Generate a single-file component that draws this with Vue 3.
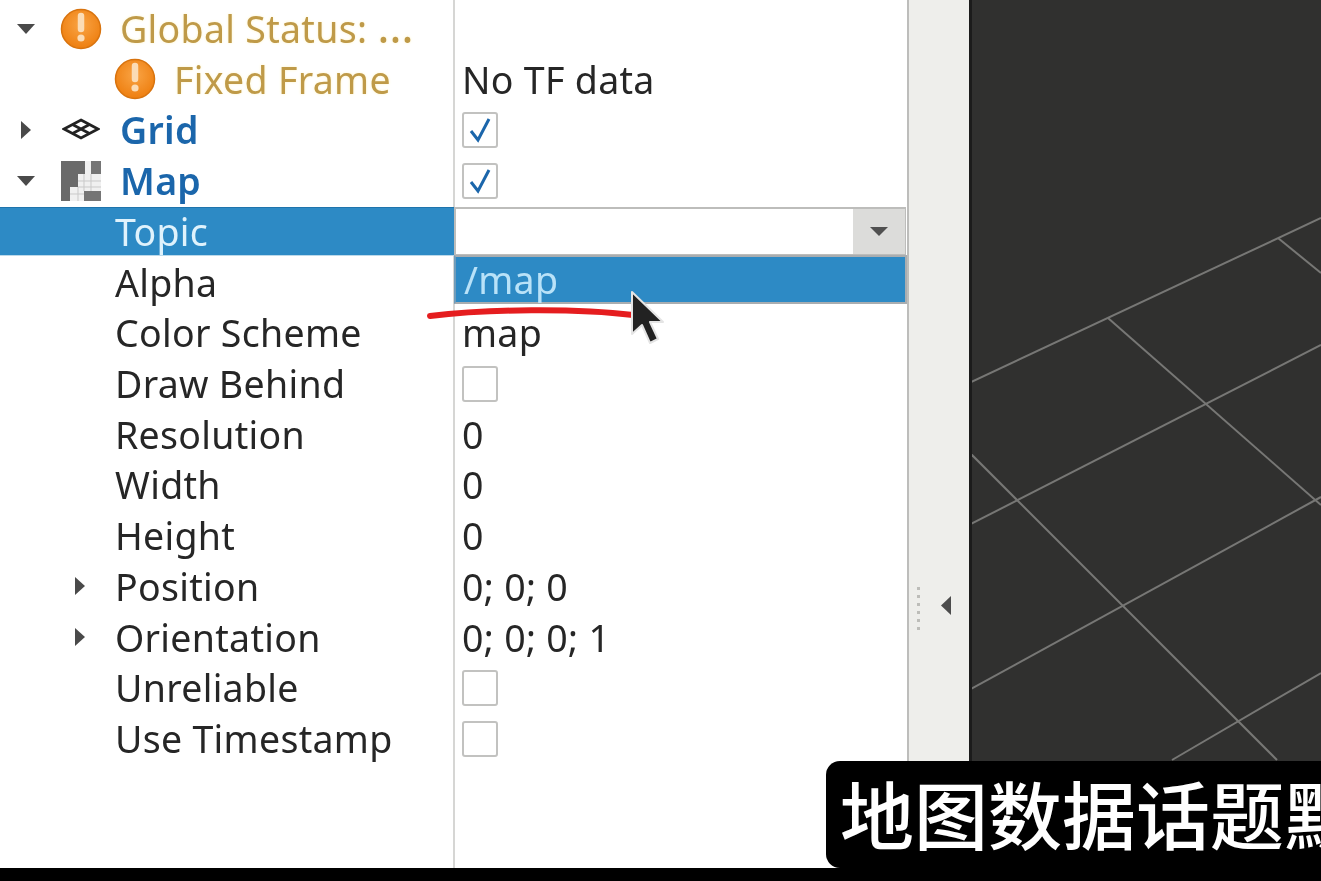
<script setup>
const rows = [
  { label: 'Global Status: ', elide: true, depth: 'd0', twist: 'down', icon: 'warn', tone: 'warning' },
  { label: 'Fixed Frame', depth: 'd2', icon: 'warn', tone: 'warning', value: 'No TF data' },
  { label: 'Grid', depth: 'd0', twist: 'right', icon: 'grid', tone: 'display', check: true },
  { label: 'Map', depth: 'd0', twist: 'down', icon: 'map', tone: 'display', check: true },
  { label: 'Topic', depth: 'd1', selected: true, combo: true },
  { label: 'Alpha', depth: 'd1' },
  { label: 'Color Scheme', depth: 'd1', value: 'map' },
  { label: 'Draw Behind', depth: 'd1', check: false },
  { label: 'Resolution', depth: 'd1', value: '0' },
  { label: 'Width', depth: 'd1', value: '0' },
  { label: 'Height', depth: 'd1', value: '0' },
  { label: 'Position', depth: 'd1', twist: 'right', value: '0; 0; 0' },
  { label: 'Orientation', depth: 'd1', twist: 'right', value: '0; 0; 0; 1' },
  { label: 'Unreliable', depth: 'd1', check: false },
  { label: 'Use Timestamp', depth: 'd1', check: false }
]
const gridLines = [
  [0, 383, 352, 218],
  [0, 525, 352, 345],
  [0, 690, 352, 497],
  [203, 760, 352, 673],
  [139, 318, 352, 505],
  [309, 238, 352, 273],
  [0, 452, 308, 760]
]
</script>

<template>
  <div class="screen">
    <main class="workspace">
      <section class="props">
        <div class="tree">
          <div v-for="row in rows" :key="row.label" class="row" :class="{ selected: row.selected }">
            <div class="name" :class="[row.depth, row.tone]">
              <span v-if="row.depth !== 'd2'" class="twist">
                <svg v-if="row.twist === 'down'" width="20" height="12" viewBox="0 0 20 12"><path d="M1 1h18L10 11z" fill="#4a4a4a" /></svg>
                <svg v-else-if="row.twist === 'right'" width="12" height="20" viewBox="0 0 12 20"><path d="M1 1v18l10-9z" fill="#4a4a4a" /></svg>
              </span>
              <span v-if="row.icon" class="icon">
                <svg v-if="row.icon === 'warn'" width="42" height="42" viewBox="0 0 42 42">
                  <circle cx="21" cy="21" r="19.5" fill="url(#orange)" stroke="#d8730e" stroke-width="1.5" />
                  <path d="M21 8v13" stroke="#fbdcb6" stroke-width="6.5" stroke-linecap="round" />
                  <circle cx="21" cy="30" r="3.6" fill="#fbdcb6" />
                </svg>
                <svg v-else-if="row.icon === 'grid'" class="grid-icon" width="38" height="22" viewBox="0 0 38 22" fill="none" stroke="#222" stroke-width="2.8">
                  <path d="M19 2 36 11 19 20 2 11z" />
                  <path d="M10.5 6.5 27.5 15.5M27.5 6.5 10.5 15.5" />
                </svg>
                <svg v-else width="42" height="42" viewBox="0 0 42 42">
                  <rect x="1" y="1" width="40" height="40" fill="#f0f0f0" />
                  <path d="M1 1h24v13h-7v13h-8v14H1z" fill="#6a6a6a" />
                  <rect x="31" y="1" width="10" height="13" fill="#757575" />
                  <rect x="24" y="31" width="17" height="10" fill="#757575" />
                  <path d="M18 21h23M18 27h23M10 34h14M24 14v17M31 14v17M18 27v14" stroke="#c9c9c9" stroke-width="1" />
                </svg>
              </span>
              <span class="text">{{ row.label }}<span v-if="row.elide" class="elide">…</span></span>
            </div>
            <div class="value">
              <span v-if="row.value">{{ row.value }}</span>
              <span v-else-if="row.check !== undefined" class="check">
                <svg v-if="row.check" width="26" height="28" viewBox="0 0 26 28"><path d="M4 15l7 9L22 3" fill="none" stroke="#1b66ab" stroke-width="3" /></svg>
              </span>
              <div v-else-if="row.combo" class="combo">
                <span class="combo-field"></span>
                <span class="combo-btn">
                  <svg width="20" height="11" viewBox="0 0 20 11"><path d="M1 1h18l-9 9z" fill="#505050" /></svg>
                </span>
                <div class="option">/map</div>
              </div>
            </div>
          </div>
        </div>
      </section>

      <aside class="splitter">
        <span class="dots"><i v-for="n in 6" :key="n"></i></span>
        <svg class="collapse" width="12" height="21" viewBox="0 0 12 21"><path d="M11 1v19L1 10.5z" fill="#4c4c4c" /></svg>
      </aside>

      <section class="viewport">
        <svg class="floor" width="352" height="868" viewBox="0 0 352 868">
          <line v-for="(l, i) in gridLines" :key="i" :x1="l[0]" :y1="l[1]" :x2="l[2]" :y2="l[3]" stroke="#777775" stroke-width="2" />
        </svg>
      </section>

      <svg class="mark" width="230" height="70" viewBox="0 0 230 70">
        <path d="M4 26C60 19 150 18 207 25" fill="none" stroke="#e51d1f" stroke-width="6" stroke-linecap="round" />
      </svg>
      <svg class="pointer" width="36" height="58" viewBox="0 0 36 58">
        <path d="M3 2v42l10-9 8 18 8-4-8-17h13z" fill="#222" stroke="#e4e4e4" stroke-width="2" stroke-linejoin="round" />
      </svg>

      <div class="caption">地图数据话题默认</div>
    </main>
    <footer class="strip"></footer>

    <svg class="defs" width="0" height="0">
      <defs>
        <radialGradient id="orange" cx="50%" cy="40%" r="60%">
          <stop offset="0" stop-color="#f9a445" />
          <stop offset="1" stop-color="#ee7f10" />
        </radialGradient>
      </defs>
    </svg>
  </div>
</template>

<style scoped>
.screen {
  width: 1321px;
  height: 881px;
  display: flex;
  flex-direction: column;
  overflow: hidden;
  font-family: "Noto Sans", "Open Sans", "Noto Sans CJK SC", sans-serif;
  font-size: 37.5px;
  letter-spacing: 0.3px;
  color: #262626;
  background: #000;
}
.workspace {
  position: relative;
  height: 868px;
  display: flex;
  overflow: hidden;
  filter: blur(0.5px);
}
.strip {
  height: 13px;
  background: #000;
}
.props {
  width: 909px;
  flex: none;
  background: #fff;
  border-right: 2px solid #bdbdbb;
  box-sizing: border-box;
  background-image: linear-gradient(#d6d6d4, #d6d6d4);
  background-size: 2px 100%;
  background-position: 453px 0;
  background-repeat: no-repeat;
  padding-top: 3px;
}
.row {
  height: 50.72px;
  display: grid;
  grid-template-columns: 454px 1fr;
  align-items: center;
}
.name {
  display: flex;
  align-items: center;
  height: 100%;
  box-sizing: border-box;
  white-space: nowrap;
}
.selected .name {
  height: 49px;
  align-self: start;
  margin-top: 1px;
  background: #2d8ac5;
  color: #dff2fc;
  border-top: 1px solid #1f74ac;
  border-bottom: 1px solid #bcd9ea;
}
.twist {
  width: 52px;
  flex: none;
  display: flex;
  justify-content: center;
  align-items: center;
}
.d1 .twist {
  margin-left: 54px;
  margin-right: 9px;
}
.d2 {
  padding-left: 114px;
}
.icon {
  width: 42px;
  flex: none;
  display: flex;
  justify-content: center;
  align-items: center;
  margin-left: 8px;
  margin-right: 18px;
}
.d2 .icon {
  margin-left: 0;
}
.grid-icon {
  margin-bottom: 2px;
}
.warning .text {
  color: #bf9a48;
  text-shadow: 0 0 3px #fff4c8;
}
.elide {
  font-size: 46px;
  line-height: 0;
  letter-spacing: 0;
}
.display .text {
  color: #1b66ab;
  font-weight: 600;
}
.value {
  height: 100%;
  display: flex;
  align-items: center;
  padding-left: 8px;
  position: relative;
  white-space: nowrap;
}
.check {
  width: 36px;
  height: 36px;
  box-sizing: border-box;
  border: 2px solid #c2c2c0;
  border-radius: 3px;
  background: #fff;
  display: flex;
  align-items: center;
  justify-content: center;
}
.combo {
  position: absolute;
  left: 0;
  right: 1px;
  top: 1px;
  bottom: 2px;
  display: flex;
  border: 2px solid #bdbdbb;
  border-bottom-width: 1px;
  border-right-width: 1px;
  background: #fff;
}
.combo-field {
  flex: 1;
}
.combo-btn {
  width: 52px;
  background: #dcdcda;
  display: flex;
  align-items: center;
  justify-content: center;
}
.option {
  position: absolute;
  left: -2px;
  right: -2px;
  top: 46px;
  height: 49px;
  box-sizing: border-box;
  background: #2d8ac5;
  border: 2px solid #a9adb0;
  border-left-color: #6f9cba;
  color: #b9e2f8;
  padding-left: 8px;
  line-height: 45px;
}
.splitter {
  width: 60px;
  flex: none;
  background: #eeeeeb;
  position: relative;
}
.dots {
  position: absolute;
  left: 8px;
  top: 587px;
  display: flex;
  flex-direction: column;
  gap: 5px;
}
.dots i {
  width: 3px;
  height: 3px;
  background: #bdbdb9;
}
.collapse {
  position: absolute;
  left: 31px;
  top: 595px;
}
.viewport {
  flex: 1;
  background: #30302f;
  position: relative;
  border-left: 3px solid #1b1b1b;
  overflow: hidden;
}
.floor {
  position: absolute;
  left: -3px;
  top: 0;
}
.mark {
  position: absolute;
  left: 426px;
  top: 290px;
}
.pointer {
  position: absolute;
  left: 629px;
  top: 290px;
}
.caption {
  position: absolute;
  left: 826px;
  top: 761px;
  width: 600px;
  height: 107px;
  box-sizing: border-box;
  padding-left: 14px;
  background: #000;
  border-radius: 14px;
  color: #fff;
  font-family: "Noto Sans CJK SC", sans-serif;
  font-size: 74px;
  font-weight: 500;
  letter-spacing: 0;
  line-height: 102px;
  white-space: nowrap;
}
.defs {
  position: absolute;
}
</style>
